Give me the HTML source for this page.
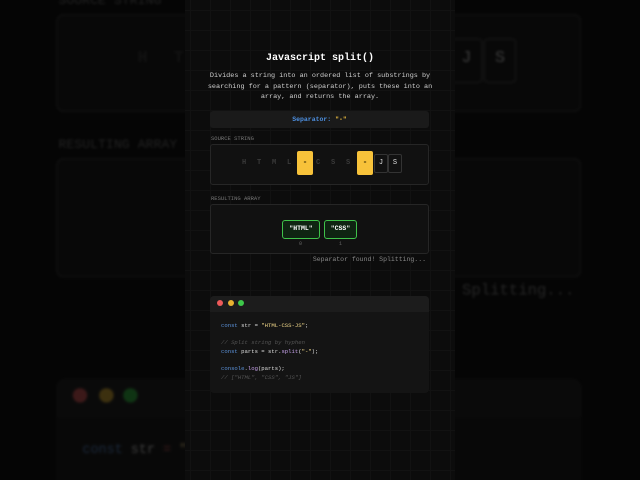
<!DOCTYPE html>
<html><head><style>
*{margin:0;padding:0;box-sizing:border-box}
html,body{width:640px;height:480px;background:#050505;overflow:hidden;font-family:"Liberation Mono","DejaVu Sans Mono",monospace}
#root{position:relative;width:640px;height:480px;overflow:hidden;contain:strict;clip-path:inset(0);background:#050505}
.scene{position:absolute;left:0;top:0;width:640px;height:480px}
.bg{transform:scale(2.4);transform-origin:320px 237px;opacity:.25;filter:blur(.6px)}
.col{position:absolute;left:185px;top:0;width:270px;height:480px;background-color:#0c0c0c;
background-image:linear-gradient(#121212 1px,transparent 1px),linear-gradient(90deg,#121212 1px,transparent 1px);background-size:20px 20px;background-position:5px 10px}
.a{position:absolute}
.title{left:185px;width:270px;top:53px;text-align:center;color:#fff;font-weight:bold;font-size:10px}
.desc{left:207px;width:226px;top:71px;text-align:center;color:#cfcfcf;font-size:6.8px;line-height:10.5px}
.sep{left:210px;top:111px;width:219px;height:17px;background:#1a1a1a;border-radius:3px;text-align:center;font-size:6.5px;line-height:17px;color:#4d8fe0;font-weight:bold}
.sep b{color:#f0c040}
.lbl{left:211px;font-size:5.5px;color:#777}
.box{left:210px;width:219px;background:#111;border:1px solid #262626;border-radius:3px}
.ch{font-size:7px;color:#3a3a3a;top:159px;font-weight:bold}
.dash{background:#f7c23a;border-radius:2px;top:151px;width:16px;height:24px;color:#3a2a00;text-align:center;line-height:24px;font-size:8px;font-weight:bold}
.kb{top:154px;width:14px;height:19px;border:1px solid #333;border-radius:2px;color:#ddd;text-align:center;line-height:17px;font-size:7px}
.gr{top:220px;height:19px;border:1.5px solid #3fc24a;background:#0f2412;border-radius:3px;color:#fff;font-size:6.5px;font-weight:bold;text-align:center;line-height:16px}
.idx{top:241px;font-size:5px;color:#666}
.found{left:300px;width:126px;text-align:right;top:256px;font-size:6.5px;color:#888}
.win{left:210px;top:296px;width:219px;height:97px;background:#141414;border-radius:4px;overflow:hidden}
.hdr{height:16px;background:#1c1c1c}
.dot{top:300px;width:6px;height:6px;border-radius:50%}
.code{left:221px;font-size:5.6px;color:#ddd;white-space:pre}
.k{color:#5a8fd6}.s{color:#f3d98a}.c{color:#555;font-style:italic}.f{color:#c4a0e8}.r{color:#e06060}
</style></head><body><div id="root">
<div class="scene bg">
<div class="a lbl" style="top:135px">SOURCE STRING</div>
<div class="a box" style="top:144px;height:41px"></div>
<div class="a ch" style="left:244px">H</div><div class="a ch" style="left:259px">T</div><div class="a ch" style="left:274px">M</div><div class="a ch" style="left:289px">L</div>
<div class="a ch" style="left:318px">C</div><div class="a ch" style="left:333px">S</div><div class="a ch" style="left:348px">S</div>
<div class="a kb" style="left:374px">J</div><div class="a kb" style="left:388px">S</div>
<div class="a lbl" style="top:195px">RESULTING ARRAY</div>
<div class="a box" style="top:204px;height:50px"></div>
<div class="a found">Separator found! Splitting...</div>
<div class="a win" style="height:76px"><div class="hdr"></div></div>
<div class="a dot" style="left:217px;background:#e05555"></div><div class="a dot" style="left:228px;background:#e0b030"></div><div class="a dot" style="left:238px;background:#30c040"></div>
<div class="a code" style="top:322px"><span class="k">const</span> str <span class="r">=</span> <span class="s">"HTML-CSS-JS"</span>;</div>
</div>
<div class="col"></div>
<div class="scene">
<div class="a title">Javascript split()</div>
<div class="a desc">Divides a string into an ordered list of substrings by searching for a pattern (separator), puts these into an array, and returns the array.</div>
<div class="a sep">Separator: <b>"-"</b></div>
<div class="a lbl" style="top:135px">SOURCE STRING</div>
<div class="a box" style="top:144px;height:41px"></div>
<div class="a ch" style="left:242px">H</div><div class="a ch" style="left:257px">T</div><div class="a ch" style="left:272px">M</div><div class="a ch" style="left:287px">L</div>
<div class="a dash" style="left:297px">-</div>
<div class="a ch" style="left:316px">C</div><div class="a ch" style="left:331px">S</div><div class="a ch" style="left:346px">S</div>
<div class="a dash" style="left:357px">-</div>
<div class="a kb" style="left:374px">J</div><div class="a kb" style="left:388px">S</div>
<div class="a lbl" style="top:195px">RESULTING ARRAY</div>
<div class="a box" style="top:204px;height:50px"></div>
<div class="a gr" style="left:282px;width:38px">"HTML"</div>
<div class="a gr" style="left:324px;width:33px">"CSS"</div>
<div class="a idx" style="left:299px">0</div><div class="a idx" style="left:339px">1</div>
<div class="a found">Separator found! Splitting...</div>
<div class="a win"><div class="hdr"></div></div>
<div class="a dot" style="left:217px;background:#ee5a5a"></div><div class="a dot" style="left:228px;background:#e8b230"></div><div class="a dot" style="left:238px;background:#3ec84a"></div>
<div class="a code" style="top:322px"><span class="k">const</span> str = <span class="s">"HTML-CSS-JS"</span>;</div>
<div class="a code" style="top:339px"><span class="c">// Split string by hyphen</span></div>
<div class="a code" style="top:348px"><span class="k">const</span> parts = str.<span class="f">split</span>(<span class="s">"-"</span>);</div>
<div class="a code" style="top:365px"><span class="k">console</span>.<span class="f">log</span>(parts);</div>
<div class="a code" style="top:374px"><span class="c">// ["HTML", "CSS", "JS"]</span></div>
</div>
</div></body></html>
